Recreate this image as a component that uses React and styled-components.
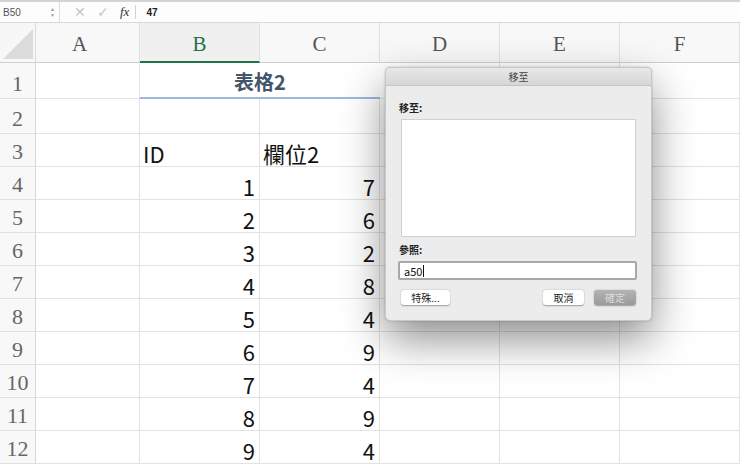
import React from "react";
import styled, { createGlobalStyle } from "styled-components";

const GlobalStyle = createGlobalStyle`
  html, body {
    margin: 0;
    padding: 0;
    background: #ffffff;
    overflow: hidden;
  }
  body {
    font-family: "Noto Sans CJK TC", "Noto Sans", sans-serif;
  }
`;

const Page = styled.div`
  position: relative;
  width: 740px;
  height: 468px;
  overflow: hidden;
  background: #fff;
`;

const FormulaBar = styled.div`
  display: flex;
  align-items: center;
  height: 20px;
  border-top: 2px solid #d4d4d4;
  border-bottom: 1px solid #d9d9d9;
  background: #fdfdfd;
  font-family: "Liberation Sans", Arial, sans-serif;
  font-size: 10px;
`;

const NameBox = styled.div`
  display: flex;
  align-items: center;
  justify-content: space-between;
  width: 52px;
  padding: 0 4px 0 3px;
  height: 100%;
  color: #555;
  border-right: 1px solid #dcdcdc;
`;

const Spinner = styled.div`
  display: flex;
  flex-direction: column;
  align-items: center;
  gap: 1px;
  color: #9a9a9a;
  font-size: 5px;
  line-height: 5px;
`;

const BarIcons = styled.div`
  display: flex;
  align-items: center;
  gap: 11px;
  padding: 0 8px 0 14px;
  height: 100%;
  color: #c5c5c5;
  font-size: 14px;
`;

const Fx = styled.span`
  font-family: "Liberation Serif", serif;
  font-style: italic;
  font-size: 13px;
  color: #333;
  padding-right: 6px;
  border-right: 1px solid #d0d0d0;
  line-height: 14px;
`;

const FormulaValue = styled.div`
  font-weight: bold;
  color: #222;
  font-size: 10px;
  padding-left: 2px;
`;

const Sheet = styled.div`
  display: grid;
  grid-template-columns: 36px 104px repeat(5, 120px);
  grid-template-rows: 40px 36px 35px 33px repeat(9, 33px);
`;

const Corner = styled.div`
  background: #f7f7f7;
  border-right: 1px solid #dadada;
  border-bottom: 1px solid #d0d0d0;
  position: relative;
  &::after {
    content: "";
    position: absolute;
    right: 2px;
    bottom: 3px;
    width: 0;
    height: 0;
    border-left: 30px solid transparent;
    border-bottom: 30px solid #dcdcdc;
  }
`;

const ColHead = styled.div`
  display: flex;
  align-items: center;
  justify-content: center;
  background: ${(p) => (p.$active ? "#f0f0f0" : "#f8f8f8")};
  border-right: 1px solid #e0e0e0;
  border-bottom: ${(p) => (p.$active ? "2px solid #217346" : "1px solid #d0d0d0")};
  color: ${(p) => (p.$active ? "#217346" : "#555")};
  font-family: "Liberation Serif", serif;
  font-size: 21px;
  padding-top: 4px;
  padding-right: ${(p) => p.$shift || 0}px;
  box-sizing: border-box;
`;

const RowHead = styled.div`
  display: flex;
  align-items: flex-end;
  justify-content: center;
  background: #f8f8f8;
  border-right: 1px solid #d6d6d6;
  border-bottom: 1px solid #e2e2e2;
  color: #666;
  font-family: "Liberation Serif", serif;
  font-size: 22px;
  line-height: 1;
  padding-bottom: 3px;
  box-sizing: border-box;
`;

const Cell = styled.div`
  display: flex;
  align-items: flex-end;
  justify-content: ${(p) => (p.$num ? "flex-end" : "flex-start")};
  border-right: 1px solid #e2e2e2;
  border-bottom: 1px solid #e2e2e2;
  padding: 0 4px 0 3px;
  font-size: 22px;
  line-height: 1.2;
  color: #111;
  box-sizing: border-box;
  min-width: 0;
`;

const TitleCell = styled.div`
  grid-column: span 2;
  display: flex;
  align-items: center;
  justify-content: center;
  border-bottom: 2px solid #9db7e0;
  font-size: 20px;
  font-weight: bold;
  color: #44546a;
  box-sizing: border-box;
  padding-top: 2px;
`;

const Dialog = styled.div`
  position: absolute;
  left: 385px;
  top: 67px;
  width: 267px;
  height: 254px;
  background: #ececec;
  border-radius: 5px;
  border: 1px solid #c8c8c8;
  box-sizing: border-box;
  box-shadow: 0 18px 44px rgba(0, 0, 0, 0.45), 0 0 2px rgba(0, 0, 0, 0.25);
  display: flex;
  flex-direction: column;
  font-family: "Noto Sans CJK TC", "Noto Sans", sans-serif;
  font-size: 10px;
  color: #222;
  overflow: hidden;
`;

const TitleBar = styled.div`
  height: 17px;
  display: flex;
  align-items: center;
  justify-content: center;
  background: linear-gradient(#e8e8e8, #d6d6d6);
  border-bottom: 1px solid #c4c4c4;
  color: #444;
  font-size: 10px;
  flex-shrink: 0;
`;

const Body = styled.div`
  display: flex;
  flex-direction: column;
  padding: 15px 15px 0 13px;
`;

const Label = styled.div`
  font-weight: bold;
  font-size: 10px;
  color: #222;
  line-height: 14px;
`;

const ListBox = styled.div`
  margin: 4px 0 0 2px;
  height: 116px;
  background: #fff;
  border: 1px solid #d0d0d0;
`;

const RefLabel = styled(Label)`
  margin-top: 6px;
`;

const Input = styled.div`
  margin-top: 4px;
  height: 19px;
  background: #fff;
  border: 2px solid #a8a8a8;
  border-radius: 2px;
  box-sizing: border-box;
  display: flex;
  align-items: center;
  padding-left: 4px;
  font-size: 11px;
  color: #111;
  margin-right: -1px;
  margin-left: -1px;
`;

const Caret = styled.span`
  display: inline-block;
  width: 1px;
  height: 12px;
  background: #111;
  margin-left: 1px;
`;

const ButtonRow = styled.div`
  display: flex;
  align-items: center;
  margin-top: 10px;
  margin-left: 2px;
`;

const Button = styled.div`
  height: 15px;
  padding: 0 8px;
  display: flex;
  align-items: center;
  justify-content: center;
  background: ${(p) => (p.$disabled ? "linear-gradient(#b4b4b4, #9a9a9a)" : "#fff")};
  color: ${(p) => (p.$disabled ? "#dcdcdc" : "#222")};
  border-radius: 3px;
  box-shadow: 0 0.5px 1.5px rgba(0, 0, 0, 0.35);
  font-size: 10px;
  min-width: ${(p) => p.$w || 0}px;
  box-sizing: border-box;
  margin-left: ${(p) => p.$ml || 0}px;
`;

const Spacer = styled.div`
  flex: 1;
`;

const cols = ["A", "B", "C", "D", "E", "F"];
const data = [
  [1, 7],
  [2, 6],
  [3, 2],
  [4, 8],
  [5, 4],
  [6, 9],
  [7, 4],
  [8, 9],
  [9, 4],
];

const EmptyCells = ({ n }) =>
  Array.from({ length: n }).map((_, i) => <Cell key={i} />);

export default function App() {
  return (
    <Page>
      <GlobalStyle />
      <FormulaBar>
        <NameBox>
          B50
          <Spinner>
            <span>▲</span>
            <span>▼</span>
          </Spinner>
        </NameBox>
        <BarIcons>
          <span>✕</span>
          <span>✓</span>
          <Fx>fx</Fx>
        </BarIcons>
        <FormulaValue>47</FormulaValue>
      </FormulaBar>
      <Sheet>
        <Corner />
        {cols.map((c) => (
          <ColHead key={c} $active={c === "B"} $shift={c === "A" ? 16 : 0}>
            {c}
          </ColHead>
        ))}

        <RowHead>1</RowHead>
        <Cell />
        <TitleCell>表格2</TitleCell>
        <EmptyCells n={3} />

        <RowHead>2</RowHead>
        <EmptyCells n={6} />

        <RowHead>3</RowHead>
        <Cell />
        <Cell>ID</Cell>
        <Cell>欄位2</Cell>
        <EmptyCells n={3} />

        {data.map(([id, v], i) => (
          <React.Fragment key={i}>
            <RowHead>{i + 4}</RowHead>
            <Cell />
            <Cell $num>{id}</Cell>
            <Cell $num>{v}</Cell>
            <EmptyCells n={3} />
          </React.Fragment>
        ))}
      </Sheet>

      <Dialog>
        <TitleBar>移至</TitleBar>
        <Body>
          <Label>移至:</Label>
          <ListBox />
          <RefLabel>參照:</RefLabel>
          <Input>
            a50
            <Caret />
          </Input>
          <ButtonRow>
            <Button $w={49}>特殊...</Button>
            <Spacer />
            <Button $w={41}>取消</Button>
            <Button $w={42} $ml={10} $disabled>
              確定
            </Button>
          </ButtonRow>
        </Body>
      </Dialog>
    </Page>
  );
}
